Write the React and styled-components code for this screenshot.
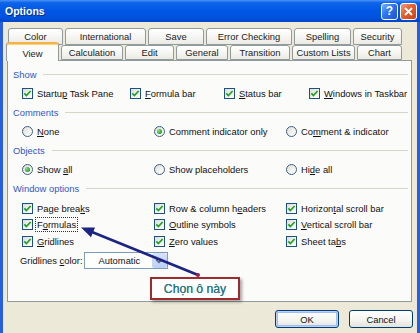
import React from 'react';
import styled, { createGlobalStyle } from 'styled-components';

const Global = createGlobalStyle`
  html, body { margin: 0; padding: 0; background: #fff; }
  body { font-family: "Liberation Sans", Arial, sans-serif; }
  * { box-sizing: border-box; }
`;

const Window = styled.div`
  position: relative;
  width: 420px;
  height: 333px;
  overflow: hidden;
  display: flex;
  flex-direction: column;
  background: #ece9d8;
`;

const TitleBar = styled.div`
  height: 22px;
  flex: none;
  display: flex;
  align-items: center;
  justify-content: space-between;
  padding: 0 3px 0 5px;
  background: linear-gradient(to bottom, #4a92f6 0%, #0f64ea 12%, #0058e6 45%, #0052dd 80%, #0046c6 100%);
  color: #fff;
  font-weight: bold;
  font-size: 10.5px;
  text-shadow: 1px 1px 0 #0b2f8a;
`;

const TitleButtons = styled.div`
  display: flex;
  gap: 2px;
`;

const TitleButton = styled.div`
  width: 17px;
  height: 17px;
  border: 1px solid #fff;
  border-radius: 3px;
  display: flex;
  align-items: center;
  justify-content: center;
  color: #fff;
  font-size: 12px;
  font-weight: bold;
  text-shadow: none;
  background: ${p => p.$close
    ? 'linear-gradient(135deg, #f09a7a 0%, #e2602f 45%, #c9431a 100%)'
    : 'linear-gradient(135deg, #79aefb 0%, #2e72ef 45%, #1a56d8 100%)'};
`;

const Frame = styled.div`
  flex: 1;
  display: flex;
  flex-direction: column;
  border-left: 3px solid #2a5fdc;
  border-right: 3px solid #2a5fdc;
  padding: 6px 5px 0 4px;
`;

const TabRow = styled.div`
  display: flex;
  gap: 2px;
  align-items: flex-end;
  height: ${p => p.$h}px;
  margin-left: ${p => p.$ml}px;
  margin-top: ${p => p.$mt || 0}px;
  position: relative;
  z-index: ${p => p.$z || 0};
`;

const Tab = styled.div`
  width: ${p => p.$w}px;
  height: ${p => (p.$active ? 19 : p.$h)}px;
  flex: none;
  display: flex;
  align-items: center;
  justify-content: center;
  font-size: 9.4px;
  color: #222;
  border: 1px solid #919b9c;
  border-bottom: ${p => (p.$active ? 'none' : '1px solid #919b9c')};
  border-radius: 3px 3px 0 0;
  background: ${p => (p.$active ? '#fbfbf9' : 'linear-gradient(to bottom, #ffffff 0%, #f6f6f3 50%, #ebeae4 100%)')};
  margin-bottom: ${p => (p.$active ? -1 : 0)}px;
  position: relative;
  z-index: ${p => (p.$active ? 2 : 1)};
  padding-top: ${p => (p.$active ? 2 : 0)}px;
  ${p => p.$active && `
    border-top: 2px solid #f2b347;
    box-shadow: inset 0 1px 0 #ffd27a;
  `}
`;

const Panel = styled.div`
  height: 242px;
  flex: none;
  border: 1px solid #919b9c;
  background: #fbfbf9;
  padding: 4px 3px 0 5px;
  display: flex;
  flex-direction: column;
  font-size: 9.4px;
  color: #111;
`;

const GroupHeader = styled.div`
  height: 19px;
  display: flex;
  align-items: center;
  color: #2f58c4;
  &::after {
    content: '';
    flex: 1;
    height: 1px;
    background: #d6d5c9;
    margin-left: 7px;
  }
`;

const ItemGrid = styled.div`
  display: grid;
  grid-template-columns: ${p => p.$cols};
  grid-auto-rows: ${p => p.$rowH}px;
  padding-left: 9px;
  padding-top: ${p => p.$pt || 0}px;
  align-items: center;
`;

const Item = styled.div`
  display: flex;
  align-items: center;
  gap: 4px;
  white-space: nowrap;
`;

const Label = styled.span`
  ${p => p.$focus && `
    outline: 1px dotted #333;
    outline-offset: 1px;
  `}
`;

const CheckBox = styled.span`
  width: 11px;
  height: 11px;
  flex: none;
  border: 1px solid #1c5180;
  background: linear-gradient(135deg, #dcdcd7 0%, #f4f4f0 60%, #ffffff 100%);
  display: flex;
  align-items: center;
  justify-content: center;
`;

const RadioDot = styled.span`
  width: 11px;
  height: 11px;
  flex: none;
  border-radius: 50%;
  border: 1px solid #3f5e85;
  background: linear-gradient(135deg, #dcdcd7 0%, #f4f4f0 60%, #ffffff 100%);
  display: flex;
  align-items: center;
  justify-content: center;
  &::after {
    content: '';
    display: ${p => (p.$on ? 'block' : 'none')};
    width: 5px;
    height: 5px;
    border-radius: 50%;
    background: radial-gradient(circle at 35% 35%, #8fe08b 0%, #34a832 60%, #1f8a1d 100%);
  }
`;

const ColorRow = styled.div`
  display: flex;
  align-items: center;
  gap: 1px;
  height: 22px;
  padding-left: 7px;
`;

const Select = styled.div`
  width: 84px;
  height: 17px;
  border: 1px solid #7f9db9;
  background: #fff;
  display: flex;
  align-items: center;
`;

const SelectText = styled.span`
  flex: 1;
  padding-left: 14px;
`;

const SelectButton = styled.span`
  width: 15px;
  height: 15px;
  border-radius: 2px;
  background: linear-gradient(to bottom, #d8e3fc 0%, #bccff7 100%);
  display: flex;
  align-items: center;
  justify-content: center;
`;

const ButtonRow = styled.div`
  display: flex;
  justify-content: flex-end;
  gap: 10px;
  margin-top: 8px;
  margin-right: -1px;
`;

const Button = styled.div`
  width: 64px;
  height: 18px;
  border: 1px solid #003c74;
  border-radius: 3px;
  display: flex;
  align-items: center;
  justify-content: center;
  font-size: 9.4px;
  color: #111;
  background: linear-gradient(to bottom, #ffffff 0%, #f4f4f0 60%, #e3e2da 100%);
  box-shadow: ${p => (p.$default ? 'inset 0 0 0 1px #b8d0f8, inset 0 0 0 2px #a0bdf0' : 'none')};
`;

const Callout = styled.div`
  position: absolute;
  left: 150px;
  top: 277px;
  width: 90px;
  height: 23px;
  border: 2px solid #9e2b2d;
  background: #fff;
  box-shadow: 2px 2px 3px rgba(0, 0, 0, 0.35);
  display: flex;
  align-items: center;
  justify-content: center;
  font-size: 12.2px;
  color: #2a7884;
  text-shadow: 0 0 0.4px #2a7884;
  z-index: 5;
`;

const Overlay = styled.svg`
  position: absolute;
  left: 0;
  top: 0;
  z-index: 6;
  pointer-events: none;
`;

const Check = ({ on = true }) => (
  <CheckBox>
    {on && (
      <svg width="9" height="9" viewBox="0 0 9 9">
        <path d="M1.3 4.4 L3.4 6.6 L7.6 2" fill="none" stroke="#21a121" strokeWidth="1.7" />
      </svg>
    )}
  </CheckBox>
);

const CheckItem = ({ children, focus }) => (
  <Item>
    <Check />
    <Label $focus={focus}>{children}</Label>
  </Item>
);

const RadioItem = ({ children, on }) => (
  <Item>
    <RadioDot $on={on} />
    <Label>{children}</Label>
  </Item>
);

const backTabs = [
  ['Color', 55], ['International', 81], ['Save', 56], ['Error Checking', 86], ['Spelling', 57], ['Security', 49],
];
const frontTabs = [
  ['View', 53, true], ['Calculation', 62], ['Edit', 49], ['General', 52], ['Transition', 60], ['Custom Lists', 63], ['Chart', 45],
];

export default function App() {
  return (
    <>
      <Global />
      <Window>
        <TitleBar>
          <span>Options</span>
          <TitleButtons>
            <TitleButton>?</TitleButton>
            <TitleButton $close>
              <svg width="9" height="9" viewBox="0 0 9 9">
                <path d="M1 1 L8 8 M8 1 L1 8" stroke="#fff" strokeWidth="1.8" />
              </svg>
            </TitleButton>
          </TitleButtons>
        </TitleBar>
        <Frame>
          <TabRow $h={17} $ml={1}>
            {backTabs.map(([t, w]) => (
              <Tab key={t} $w={w} $h={17}>{t}</Tab>
            ))}
          </TabRow>
          <TabRow $h={18} $ml={-1} $mt={-3} $z={2}>
            {frontTabs.map(([t, w, a]) => (
              <Tab key={t} $w={w} $h={15} $active={a}>{t}</Tab>
            ))}
          </TabRow>
          <Panel>
            <GroupHeader>Show</GroupHeader>
            <ItemGrid $cols="108px 94px 85px auto" $rowH={19}>
              <CheckItem>Startu<u>p</u> Task Pane</CheckItem>
              <CheckItem><u>F</u>ormula bar</CheckItem>
              <CheckItem><u>S</u>tatus bar</CheckItem>
              <CheckItem><u>W</u>indows in Taskbar</CheckItem>
            </ItemGrid>
            <GroupHeader>Comments</GroupHeader>
            <ItemGrid $cols="132px 132px auto" $rowH={19}>
              <RadioItem><u>N</u>one</RadioItem>
              <RadioItem on>Comment indicator only</RadioItem>
              <RadioItem>Co<u>m</u>ment &amp; indicator</RadioItem>
            </ItemGrid>
            <GroupHeader>Objects</GroupHeader>
            <ItemGrid $cols="132px 132px auto" $rowH={19}>
              <RadioItem on>Show <u>a</u>ll</RadioItem>
              <RadioItem>Show placeholders</RadioItem>
              <RadioItem>Hi<u>d</u>e all</RadioItem>
            </ItemGrid>
            <GroupHeader>Window options</GroupHeader>
            <ItemGrid $cols="132px 132px auto" $rowH={16.5} $pt={2}>
              <CheckItem>Page brea<u>k</u>s</CheckItem>
              <CheckItem>Row &amp; column h<u>e</u>aders</CheckItem>
              <CheckItem>Horizon<u>t</u>al scroll bar</CheckItem>
              <CheckItem focus>F<u>o</u>rmulas</CheckItem>
              <CheckItem><u>O</u>utline symbols</CheckItem>
              <CheckItem><u>V</u>ertical scroll bar</CheckItem>
              <CheckItem><u>G</u>ridlines</CheckItem>
              <CheckItem><u>Z</u>ero values</CheckItem>
              <CheckItem>Sheet ta<u>b</u>s</CheckItem>
            </ItemGrid>
            <ColorRow>
              <span>Gridlines <u>c</u>olor:</span>
              <Select>
                <SelectText>Automatic</SelectText>
                <SelectButton>
                  <svg width="8" height="6" viewBox="0 0 8 6">
                    <path d="M1 1.5 L4 4.5 L7 1.5" fill="none" stroke="#4d6185" strokeWidth="1.5" />
                  </svg>
                </SelectButton>
              </Select>
            </ColorRow>
          </Panel>
          <ButtonRow>
            <Button $default>OK</Button>
            <Button>Cancel</Button>
          </ButtonRow>
        </Frame>
        <Callout>Chọn ô này</Callout>
        <Overlay width="420" height="333" viewBox="0 0 420 333">
          <line x1="198" y1="275" x2="92" y2="232" stroke="#1c2582" strokeWidth="2.6" />
          <polygon points="81,227.5 95,227.6 91,237.2" fill="#1c2582" />
          <circle cx="198" cy="275" r="2" fill="#8a2a45" />
        </Overlay>
      </Window>
    </>
  );
}
